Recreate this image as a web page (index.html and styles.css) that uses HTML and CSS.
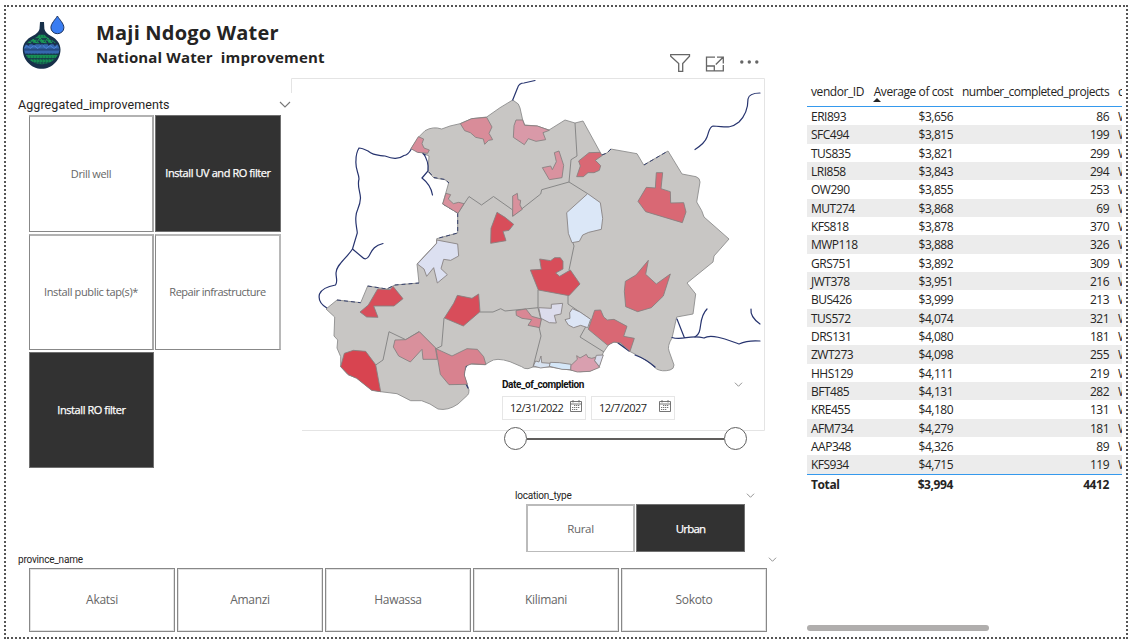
FILE: index.html
```html
<!DOCTYPE html>
<html lang="en">
<head>
<meta charset="utf-8">
<title>Maji Ndogo Water</title>
<link rel="stylesheet" href="styles.css">
</head>
<body>
<main class="report">
  <section class="left">
    <header class="header">
      <svg class="logo" width="50" height="60" viewBox="17 13 50 60">
        <defs><clipPath id="pot"><path d="M40 32h3.500q1 4 5 6c5 3 11 6 11 12a18 17 0 0 1-35.500 0c0-6 5-9 11-12q4-2 5-6z"/></clipPath></defs>
        <path d="M40 22h4l.4 7q1 4 6.600 7c6 3 9.500 8 9.500 13.500C60.500 60 52 68.800 41.700 68.800S22.800 60 22.800 49.500C22.800 44 26.500 39 32.500 36q6-3 7-7z" fill="#18304a"/>
        <g clip-path="url(#pot)" fill="none">
          <path d="M23 41.500h38M23 36.500h38M23 56.500h38M23 61h38M23 65h38" stroke="#178d55" stroke-width="3.400"/>
          <path d="M23 46.500h38M23 51.500h38" stroke="#3567ae" stroke-width="4.400"/>
          <path d="M22 45l3-3 3 3 3-4 3 4 4-5 4 5 4-5 3 5 3-4 3 4 3-3 3 3" stroke="#1a2f50" stroke-width="1.500"/>
          <path d="M24 43l3-3 3 3 3-4 3 4 4-5 4 5 4-5 3 5 3-4 3 4" stroke="#21a35a"/>
          <path d="M23 50h38" stroke="#1a2f60" stroke-width=".7"/>
          <path d="M23 54.200h38M23 59h38M23 63h38" stroke="#16384a" stroke-width=".8" stroke-dasharray="2 1"/>
          <path d="M25 36h34M24 57h36M27 61h31M31 65h22" stroke="#16563c" stroke-width=".8" stroke-dasharray="1 2"/>
          <path d="M24 48.500l3-3 3 3 4-3 4 3 4-4 4 4 4-3 4 3 3-2" stroke="#4e85da"/>
        </g>
        <path d="M57.400 16c2 3.500 6.500 7.500 6.500 11.700a6.500 6 0 0 1-13 0c0-4.200 4.500-8.200 6.500-11.700z" fill="#3a7df2" stroke="#1f355f"/>
      </svg>
      <div class="titles">
        <h1 class="h-title">Maji Ndogo Water</h1>
        <h2 class="h-sub">National Water&nbsp; improvement</h2>
      </div>
      <svg class="tools" width="94" height="24" viewBox="668 51 94 24" fill="none" stroke="#666" stroke-width="1.300">
        <path d="M670.700 54.700h18.800v1.500l-6.800 7.300v7.900h-4v-7.900l-8-7.300z"/>
        <path d="M715 57.200h-8.500v13.600h16.800v-5.800M706.500 66h7.800v4.800M715.800 64.500l7-7M717 57.200h6.300v6.300"/>
        <g fill="#666" stroke="none"><circle cx="741.800" cy="62" r="1.700"/><circle cx="749.300" cy="62" r="1.700"/><circle cx="756.800" cy="62" r="1.700"/></g>
      </svg>
    </header>

    <div class="middle">
      <section class="slicer improvements">
        <div class="slicer-head"><span class="din din-lg">Aggregated_improvements</span>
          <svg class="chev" width="12" height="7" viewBox="0 0 12 7"><path d="M1 1l5 5 5-5"/></svg></div>
        <div class="tiles">
          <div class="tile t1">Drill well</div>
          <div class="tile on">Install UV and RO filter</div>
          <div class="tile t3">Install public tap(s)*</div>
          <div class="tile t4">Repair infrastructure</div>
          <div class="tile on t5">Install RO filter</div>
        </div>
      </section>

      <section class="map-wrap">
        <svg class="map" width="476" height="354" viewBox="290 78 476 354">
          <path class="edge" d="M291.500 93V78.500H764.500V430.500H302"/>
          <path class="land" d="M512.700 100L518.300 104 520 108 522.700 120 524.700 125 537 126 549 130 565 120 575 123 583 121 601.700 155 607 153 610.700 149 637 153.700 643.700 165 668 151 682 174 696 176.700Q700 178 700 182L696.700 202 701.700 210.700 704 217 729 239 714 256 713 262 687 283 695.700 294 693 314 676.700 317 672 338Q667 346 669 351L674 365Q674 369 670 370 662 372 656.700 369L646.700 360.700 636.700 355 629 351 619 343Q613 340 607.700 346L603 353 599 367 590 371Q580 373 570 370L550 367 533 367 528 368.700Q524 369 521.700 366.700L510 361.700Q496 357 490 361.700L485 364.700 468 364Q464 367 464 375L467 384 469 390Q469 394 467.700 395L458 404Q448 411 438 409L430 404 421.700 400.700 410.700 400.700 397 393.700 380.700 391.700 371.700 390 356.700 378 348 374.700 340.700 366.700 340.700 356.700 337 348 337.700 340 334 336 334.700 317 326 309 337 300 360.700 302.700 367.700 286 386.700 289 395 285 419 283 417 264 436.700 243V238.700L457.700 233V213L442.700 204 448.700 182.700 445 179.700 434 178 428 171.700 429 156 423 153 411 148.700 419 136.700 425 130.700Q433 126 441.700 129L450 126 460 123.700 471.700 118.700 486.700 117 500 107.700Z"/>
          <path class="border" d="M458 213L469 196.500 481.500 205 493.500 196.500 512.700 210V216L540.700 194 541.700 189.700 569 182 587.700 193.700M575 123L577 156 571 159.700 569 182M572.700 242L574 246 569 270M538 290V307.700M568 295.700V304L590 319 580 337 604 352M538 307.700L505 311 500.700 308.700 493 312H480M538 307.700L541 320 539 327 541 336 533 367M444 318L441.700 346 436 348.700 419 331.700 405.700 339.700 389 331.700 383 360 375.700 365"/>
          <path class="dash" d="M457.700 213V233L437 238.500M429 172L434 177.500 445 179.500 449 183M443 204L457 212.500M337 300L360.700 302.700M367.700 286L386.700 289 395 285 419 283M416 151L428 156M602 155L607 153 611 149M644 165L668 151"/>
          <g class="river">
            <path d="M512.700 100L517.500 88Q519 83 524 83L535 80.500"/>
            <path d="M411 149.500Q408 155 404 155.500C398 160 392 158.500 385 156C378 155 374 156 368 151C362 148 360 148 359 148C356 153 356 157 356 160C355 170 359 173 359 179C357 186 360 190 360.500 198C360 208 356 210 356 216C355 223 357 228 357.300 233L352.500 249C346 259 336 265 336 273C336 278 338 282 335.500 285C330 286 322 288 319.500 294C318 300 322 305 326.500 307.700"/>
            <path d="M352.500 249L362 257Q366 261 369 256C372 251 373 246 383 243.500"/>
            <path d="M423 153Q429 161 428 171L422 178Q431 185 432.500 195"/>
            <path d="M695 149.500Q705 143 707 137C709 132 709 127 713 126C724 126 729 130 739 122C747 114 748 106 748 99Q749 93 760 93"/>
            <path d="M677 319L684.500 338M672 337.500C683 341 690 334 704 338C712 333 730 341 739 344Q748 340 760 341"/>
            <path d="M695 337C704 332 697 319 707 309M751 309Q750 317 760 324"/>
            <path d="M468 364Q460 373 468 388M618 343L629 351M635 355Q646 359 655 367"/>
          </g>
          <g transform="translate(290 70) scale(.33333)" class="zones">
            <path fill="#d88d9b" d="M363 236L385 200 401 207 396 221 402 234 418 240 413 250 382 247Z"/>
            <path fill="#d98c99" d="M511 161L545 146 590 142 606 171 597 190 608 209 596 211 584 223 580 207 557 202 541 188 524 182Z"/>
            <path fill="#d9909c" d="M468 370L482 374 475 387 490 401 506 397 522 401 504 430 488 420 458 402Z"/>
            <path fill="#d9909c" d="M668 378L682 370 684 389 692 391 690 405 697 418 668 439Z"/>
            <path fill="#d84d5a" d="M621 427L645 442 671 463 657 481 639 484 648 512 602 520 603 475Z"/>
          </g>
          <g transform="translate(520 40) scale(.33333)" class="zones">
            <path fill="#d999a8" d="M-12 240H8L14 256 52 258 88 271 69 278 77 299 48 304 25 296 13 314-20 292-18 257Z"/>
            <path fill="#d9929f" d="M103 338L117 333 131 376 126 413 88 419 67 383 92 378 97 389 109 365Z"/>
            <path fill="#d96874" d="M176 363L207 338 240 337 246 347 226 361 242 377 238 391 222 398 204 398 190 410 170 410 181 378Z"/>
            <path fill="#d96874" d="M409 398H428L423 446 451 455 452 489 491 488 498 516 487 548 377 515 354 484 379 442 406 444Z"/>
            <path fill="#dbe7f7" d="M203 461L241 488 248 535 244 568 206 577 188 585 178 604 156 608 145 580 140 518Z"/>
          </g>
          <g transform="translate(290 240) scale(.33333)" class="zones">
            <path fill="#dce0f1" d="M440 0L503 12 506 48 482 61 461 58 453 86 472 104 442 129 431 83 410 109 402 87 382 72 440 10Z"/>
            <path fill="#d84d5a" d="M263 147L300 149 309 139 339 176 312 198 251 198 264 232 230 231 210 216 235 195Z"/>
            <path fill="#d84d5a" d="M502 166L546 175 566 162 570 215 520 258 463 234 491 190Z"/>
            <path fill="#d84450" d="M163 340L190 331 227 334 257 374 272 455 245 451 200 415 175 404 152 380Z"/>
            <path fill="#d9909c" d="M315 300L347 299 388 275 436 323 442 358H399L396 328 361 366 326 348 310 321Z"/>
            <path fill="#d8828f" d="M438 326L486 348 531 326 562 328 581 350 588 374 545 371 527 379 523 405 532 433 477 434 451 403Z"/>
          </g>
          <g transform="translate(490 240) scale(.33333)" class="zones">
            <path fill="#d84d5a" d="M149 57L182 62 194 53H211L219 64V87L197 99 209 109 241 90 270 132 237 167 145 150 121 90 154 88Z"/>
            <path fill="#d96874" d="M475 61L467 103 499 132 541 102 520 168 484 203 443 215 407 200 403 154 406 124 438 105Z"/>
            <path fill="#d98794" d="M78 212L108 207 125 229 154 237 149 263 114 256 125 239 96 235 79 226Z"/>
            <path fill="#dcdcec" d="M146 203L184 205V193L218 190 213 222 193 226 199 249 178 248 153 235Z"/>
            <path fill="#dce5f5" d="M247 206L270 216 302 238 293 263 272 256 251 263 235 255 225 239 240 235 239 218Z"/>
            <path fill="#d96874" d="M314 211L332 210 341 231 352 240 372 238 411 259 401 289 433 295 420 334 392 309 372 306 353 316 295 268Z"/>
            <path fill="#d8e3f1" d="M130 378L137 363 147 366 153 348 155 368 181 370 179 380 152 384Z"/>
            <path fill="#d5e7f8" d="M181 367L208 368 243 373 243 389 216 388 178 379Z"/>
            <path fill="#d99faf" d="M243 376L262 358 260 347 270 354 289 343 294 352 305 355 321 351 314 362 329 382 300 394 262 396 242 390Z"/>
            <path fill="#d9dceb" d="M319 346L340 345 328 380 314 362Z"/>
          </g>
        </svg>
        <section class="date-slicer">
          <div class="date-head"><span class="din din-b">Date_of_completion</span>
            <svg class="chev" width="9" height="5" viewBox="0 0 12 7"><path d="M1 1l5 5 5-5"/></svg></div>
          <div class="dates">
            <div class="date"><span>12/31/2022</span><svg class="cal" width="12" height="12" viewBox="0 0 12 12"><path d="M.5 1.500h11v10H.5zM.5 4h11M3 0v2.500M9 0v2.500"/><path d="M4 5.500h6M2 7.500h8M2 9.500h6" stroke-dasharray="1.300 .7"/></svg></div>
            <div class="date d2"><span>12/7/2027</span><svg class="cal" width="12" height="12" viewBox="0 0 12 12"><path d="M.5 1.500h11v10H.5zM.5 4h11M3 0v2.500M9 0v2.500"/><path d="M4 5.500h6M2 7.500h8M2 9.500h6" stroke-dasharray="1.300 .7"/></svg></div>
          </div>
          <div class="range"><i class="knob"></i><i class="rail"></i><i class="knob"></i></div>
        </section>
      </section>
    </div>

    <section class="location">
      <div class="loc-head"><span class="din din-sm">location_type</span>
        <svg class="chev" width="9" height="5" viewBox="0 0 12 7"><path d="M1 1l5 5 5-5"/></svg></div>
      <div class="loc-tiles"><div class="tile soft">Rural</div><div class="tile on urban">Urban</div></div>
    </section>

    <section class="province">
      <div class="prov-head"><span class="din din-sm">province_name</span>
        <svg class="chev" width="9" height="5" viewBox="0 0 12 7"><path d="M1 1l5 5 5-5"/></svg></div>
      <div class="prov-tiles"><div class="tile">Akatsi</div><div class="tile">Amanzi</div><div class="tile">Hawassa</div><div class="tile">Kilimani</div><div class="tile">Sokoto</div></div>
    </section>
  </section>

  <section class="right">
    <div class="table">
      <div class="row head"><span>vendor_ID</span><span>Average of cost</span><span>number_completed_projects</span><span>c</span></div>
      <div class="body" id="rows"></div>
      <div class="row total"><span>Total</span><span>$3,994</span><span>4412</span><span></span></div>
    </div>
    <div class="scroll"></div>
  </section>
</main>
<script src="rows.js"></script>
</body>
</html>
```
FILE: rows.js
```js
const vendors = [
  ["ERI893", "3,656", 86], ["SFC494", "3,815", 199], ["TUS835", "3,821", 299],
  ["LRI858", "3,843", 294], ["OW290", "3,855", 253], ["MUT274", "3,868", 69],
  ["KFS818", "3,878", 370], ["MWP118", "3,888", 326], ["GRS751", "3,892", 309],
  ["JWT378", "3,951", 216], ["BUS426", "3,999", 213], ["TUS572", "4,074", 321],
  ["DRS131", "4,080", 181], ["ZWT273", "4,098", 255], ["HHS129", "4,111", 219],
  ["BFT485", "4,131", 282], ["KRE455", "4,180", 131], ["AFM734", "4,279", 181],
  ["AAP348", "4,326", 89], ["KFS934", "4,715", 119]
];
document.getElementById("rows").innerHTML = vendors.map(v =>
  `<div class="row"><span>${v[0]}</span><span>$${v[1]}</span><span>${v[2]}</span><span>W</span></div>`
).join("");
```
FILE: styles.css
```css
* { box-sizing: border-box; }
body { margin: 0; width: 1130px; height: 644px; padding: 5px 0 0 4px; overflow: hidden; background: #fff; color: #252423; font-family: "Open Sans", "Noto Sans", sans-serif; }
.report { width: 1124px; height: 634px; border: 2px dotted #555; display: grid; grid-template-columns: 794px 1fr; }

.left { display: flex; flex-direction: column; }
.header { height: 71px; display: flex; align-items: flex-start; }
.logo { margin: 6px 0 0 11px; flex: none; }
.titles { margin-left: 29px; padding-top: 13px; width: 240px; white-space: nowrap; }
.h-title { margin: 0; font-size: 20px; line-height: 26px; font-weight: 700; letter-spacing: .2px; }
.h-sub { margin: 0; font-size: 15px; line-height: 23px; font-weight: 700; letter-spacing: .14px; }
.tools { margin: 44px 0 0 332px; flex: none; }

.middle { display: flex; height: 354px; }
.slicer { width: 284px; padding: 18px 0 0 12px; flex: none; }
.slicer-head { display: flex; align-items: center; justify-content: space-between; height: 16px; margin-right: -1px; }
.din { font-family: Roboto, "Liberation Sans", sans-serif; white-space: nowrap; }
.din-lg { font-size: 12.5px; letter-spacing: .07px; }
.din-sm { font-size: 10px; letter-spacing: -.2px; }
.din-b { font-size: 10px; font-weight: 700; letter-spacing: -.4px; color: #111; }
.chev { fill: none; stroke: #777; stroke-width: 1.1; flex: none; }
.tiles { margin: 3px 0 0 11px; display: grid; grid-template-columns: 125px 126px; grid-template-rows: 117px 116px 116px; column-gap: 1px; row-gap: 2px; }
.tile { display: flex; align-items: center; justify-content: center; border: 1px solid #888; background: #fff; color: #666; font-size: 11px; letter-spacing: -.36px; padding-bottom: 2px; white-space: nowrap; }
.tile.on { background: #323232; border-color: #707070; color: #fff; letter-spacing: -.42px; -webkit-text-stroke: .25px #fff; }
.t1, .t3 { border-top: 2px solid #b2b2b2; border-right: 2px solid #a8a8a8; }
.t4 { border-top: 2px solid #b8b8b8; border-right: 2px solid #b8b8b8; letter-spacing: -.5px; }

.map-wrap { position: relative; width: 476px; flex: none; }
.map { display: block; }
.edge { fill: none; stroke: #e4e4e4; }
.land { fill: #c8c6c4; stroke: #8d8d8d; stroke-width: .9; stroke-linejoin: round; }
.border { fill: none; stroke: #808080; stroke-width: .9; }
.dash { fill: none; stroke: #35406d; stroke-width: 1; stroke-dasharray: 4 3; }
.river { fill: none; stroke: #27346f; stroke-width: 1.2; stroke-linecap: round; }
.zones { stroke: #858080; stroke-width: 2.6; stroke-linejoin: round; }
.date-slicer { position: absolute; left: 212px; top: 298px; width: 250px; }
.date-head { display: flex; align-items: center; justify-content: space-between; height: 17px; width: 241px; }
.dates { display: flex; gap: 5px; margin-top: 3px; }
.date { width: 84px; height: 24px; border: 1px solid #e6e6e6; background: #fff; display: flex; align-items: center; justify-content: space-between; padding: 0 3px 1px 7px; font-size: 11px; letter-spacing: -.5px; }
.cal { fill: none; stroke: #666; stroke-width: .9; margin-bottom: 3px; flex: none; }
.range { display: flex; align-items: center; width: 243px; margin: 7px 0 0 2px; }
.knob { width: 23px; height: 23px; border: 1.5px solid #606060; border-radius: 50%; background: #fff; flex: none; }
.rail { flex: 1; height: 2px; background: #605e5c; }

.location { height: 121px; padding: 57px 0 0 509px; }
.loc-head { display: flex; align-items: center; justify-content: space-between; width: 240px; height: 13px; }
.loc-tiles { margin: 2px 0 0 11px; display: grid; grid-template-columns: 109px 109px; column-gap: 1px; grid-template-rows: 48px; }
.loc-tiles .tile { font-size: 11.5px; padding-bottom: 0; }
.loc-tiles .urban { letter-spacing: -.8px; }
.tile.soft { border: 2px solid #bbb; border-bottom-width: 1px; }
.province { padding-left: 12px; }
.prov-head { display: flex; align-items: center; justify-content: space-between; width: 759px; height: 12px; }
.prov-tiles { margin: 3px 0 0 11px; display: grid; grid-template-columns: repeat(5, 146px); column-gap: 2px; grid-template-rows: 64px; }
.prov-tiles .tile { font-size: 12px; letter-spacing: -.3px; box-shadow: inset 0 0 0 1px #e2e2e2; }

.right { padding: 73px 0 0 7px; display: flex; flex-direction: column; overflow: hidden; }
.table { width: 315px; overflow: hidden; font-size: 12px; white-space: nowrap; }
.row { display: grid; grid-template-columns: 61px 89px 156px 9px; height: 18.33px; line-height: 19px; }
.row span { padding: 0 4px; overflow: hidden; letter-spacing: -.5px; }
.row span:nth-child(2), .row span:nth-child(3) { text-align: right; }
.row span:nth-child(4) { padding: 0 0 0 5px; }
.row.head { height: 27px; line-height: 23px; border-bottom: 1px solid #3599ed; }
.head span { position: relative; overflow: visible; letter-spacing: -.42px; }
.row.head span:nth-child(3) { padding: 0 0 0 5px; text-align: left; letter-spacing: -.51px; }
.head span:nth-child(2)::after { content: ""; position: absolute; left: 5px; top: 18px; border: 4px solid transparent; border-top: 0; border-bottom: 4px solid #252423; }
.body .row:nth-child(even) { background: #ececec; }
.row.total { border-top: 1px solid #3599ed; font-weight: 700; height: 22px; line-height: 19px; }
.row.total span { letter-spacing: -.4px; }
.scroll { width: 182px; height: 6px; border-radius: 3px; background: #b0aead; margin-top: auto; margin-bottom: 6px; }
```
